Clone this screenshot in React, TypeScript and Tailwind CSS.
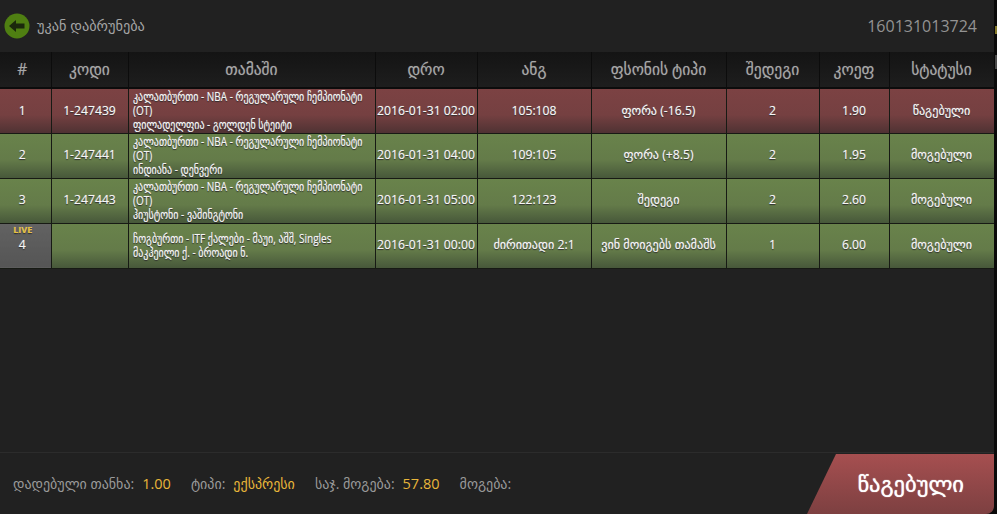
const rows = [
  { n: "1", code: "1-247439", l1: "კალათბურთი - NBA - რეგულარული ჩემპიონატი (OT)", l2: "ფილადელფია - გოლდენ სტეიტი", date: "2016-01-31 02:00", score: "105:108", bet: "ფორა (-16.5)", res: "2", odd: "1.90", st: "წაგებული", red: true },
  { n: "2", code: "1-247441", l1: "კალათბურთი - NBA - რეგულარული ჩემპიონატი (OT)", l2: "ინდიანა - დენვერი", date: "2016-01-31 04:00", score: "109:105", bet: "ფორა (+8.5)", res: "2", odd: "1.95", st: "მოგებული" },
  { n: "3", code: "1-247443", l1: "კალათბურთი - NBA - რეგულარული ჩემპიონატი (OT)", l2: "ჰიუსტონი - ვაშინგტონი", date: "2016-01-31 05:00", score: "122:123", bet: "შედეგი", res: "2", odd: "2.60", st: "მოგებული" },
  { n: "4", code: "", l1: "ჩოგბურთი - ITF ქალები - მაუი, აშშ, Singles", l2: "მაკჰეილი ქ. - ბროადი ნ.", date: "2016-01-31 00:00", score: "ძირითადი 2:1", bet: "ვინ მოიგებს თამაშს", res: "1", odd: "6.00", st: "მოგებული", live: true },
];
const heads = [
  ["#", "w-[51px] pr-[6px] font-bold"], ["კოდი", "w-[77px]"], ["თამაში", "w-[247px]"], ["დრო", "w-[102px]"], ["ანგ", "w-[114px]"],
  ["ფსონის ტიპი", "w-[135px]"], ["შედეგი", "w-[93px]"], ["კოეფ", "w-[70px]"], ["სტატუსი", "w-[105px]"],
];
const td = "border-r border-b border-[#171a14] text-center text-[12.2px] text-[#f6f6f6] [text-shadow:0_0_1px_#ffffff80,0_1px_1px_#222] p-0";

export default function App() {
  return (
    <div className="relative h-[514px] w-[997px] overflow-hidden bg-[#0a0a0a] font-['Open_Sans','DejaVu_Sans',sans-serif]">
      <div className="absolute left-[995px] top-[26px] h-[8px] w-[2px] bg-[#857a2a]" />
      <div className="absolute left-[995px] top-[55px] h-[14px] w-[2px] bg-[#4a4a4a]" />
      <div className="flex h-[514px] w-[994px] flex-col overflow-hidden rounded-br-[8px] bg-[#212121]">
        <div className="flex h-[52px] items-center justify-between pl-1 pr-[17px]">
          <div className="flex items-center gap-[7px]">
            <svg width="26" height="26" viewBox="0 0 26 26">
              <circle cx="13" cy="13" r="12.5" fill="#4f7f12" />
              <path d="M5 13 L12 7 V10.5 H20.5 V15.5 H12 V19 Z" fill="#1b280c" />
            </svg>
            <span className="text-[14.3px] text-[#a5a5a5]">უკან დაბრუნება</span>
          </div>
          <span className="text-[16px] text-[#939393]">160131013724</span>
        </div>
        <table className="w-[994px] table-fixed border-collapse">
          <thead>
            <tr className="h-[36px] bg-gradient-to-b from-[#141414] to-[#1e1e1e]">
              {heads.map(([h, w], i) => (
                <th key={i} className={`${w} border-r border-b-2 border-[#0c0c0c] text-center text-[15.5px] font-normal text-[#a8a8a8] [text-shadow:0_0_1px_#a8a8a880]`}>{h}</th>
              ))}
            </tr>
          </thead>
          <tbody>
            {rows.map((r) => {
              const bg = r.red
                ? "h-[45px] bg-gradient-to-b from-[#7c4243] via-[#754041] via-60% to-[#4f3233]"
                : "h-[45px] bg-gradient-to-b from-[#69834b] via-[#647b49] via-60% to-[#47583a]";
              return (
                <tr key={r.n} className={bg}>
                  <td className={`${td} pr-[6px] ${r.live ? "relative bg-gradient-to-b from-[#626262] to-[#555555]" : ""}`}>
                    {r.live && <span className="absolute left-0 right-[5px] top-[1px] text-[9px] font-bold leading-[10px] text-[#e8c13a]">LIVE</span>}
                    {r.n}
                  </td>
                  <td className={td}>{r.code}</td>
                  <td className={`${td} overflow-hidden px-[4px] text-left text-[10px] leading-[14px]`}>
                    <div className="w-[291px] origin-left scale-x-[0.82]">
                      <div>{r.l1}</div>
                      <div>{r.l2}</div>
                    </div>
                  </td>
                  <td className={td}>{r.date}</td>
                  <td className={td}>{r.score}</td>
                  <td className={td}>{r.bet}</td>
                  <td className={td}>{r.res}</td>
                  <td className={td}>{r.odd}</td>
                  <td className={td}>{r.st}</td>
                </tr>
              );
            })}
          </tbody>
        </table>
        <div className="flex-1" />
        <div className="flex h-[62px] items-stretch border-t border-[#2c2c2c]">
          <div className="flex flex-1 items-center pl-[13px] text-[14px] text-[#9a9a9a]">
            <span>დადებული თანხა:</span><span className="ml-2 text-[14.5px] text-[#e9b63a]">1.00</span>
            <span className="ml-5">ტიპი:</span><span className="ml-2 text-[#e9b63a]">ექსპრესი</span>
            <span className="ml-5">საჯ. მოგება:</span><span className="ml-2 text-[14.5px] text-[#e9b63a]">57.80</span>
            <span className="ml-5">მოგება:</span>
          </div>
          <div className="mt-px flex w-[187px] items-center justify-end bg-gradient-to-b from-[#a64f50] to-[#7d4041] pr-[30px] text-[22.5px] text-white [clip-path:polygon(29px_0,100%_0,100%_100%,0_100%)] [text-shadow:0_0_1px_#ffffff]">
            წაგებული
          </div>
        </div>
      </div>
    </div>
  );
}
